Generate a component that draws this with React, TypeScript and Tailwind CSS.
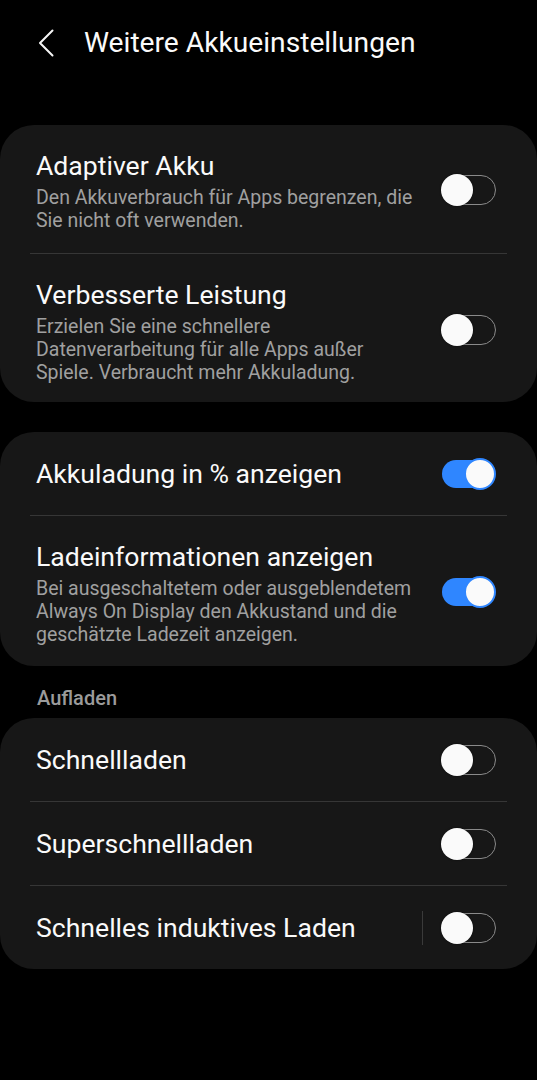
import React from "react";

function Toggle({ on }: { on: boolean }) {
  if (on) {
    return (
      <div className="relative w-[55px] h-[32px] shrink-0">
        <div className="absolute left-[1px] top-[2px] w-[53px] h-[28px] rounded-full bg-[#2f86ff]" />
        <div className="absolute right-0 top-0 w-[32px] h-[32px] rounded-full bg-[#fafafa] border-[2px] border-[#2f86ff]" />
      </div>
    );
  }
  return (
    <div className="relative w-[55px] h-[32px] shrink-0">
      <div className="absolute left-[1px] top-[1px] w-[54px] h-[30px] rounded-full border-[1.5px] border-[#8a8a8a]" />
      <div className="absolute left-0 top-0 w-[32px] h-[32px] rounded-full bg-[#fafafa] shadow-[0_0_2px_rgba(0,0,0,0.6)]" />
    </div>
  );
}

function Row({
  title,
  lines,
  on,
  divider,
  last,
  pb,
}: {
  title: string;
  lines?: string[];
  on: boolean;
  divider?: boolean;
  last?: boolean;
  pb?: string;
}) {
  const hasSub = lines && lines.length > 0;
  return (
    <div>
      <div
        className={
          hasSub
            ? "flex items-center pl-[36px] pr-[41px] pt-[27px] " + (pb ?? "pb-[21px]")
            : "flex items-center pl-[36px] pr-[41px] h-[83px]"
        }
      >
        <div className="flex-1 min-w-0">
          <div className="text-[26.6px] leading-[28px] text-[#fafafa]">{title}</div>
          {hasSub && (
            <div className="mt-[6px] text-[19.5px] leading-[23px] text-[#a0a0a0]">
              {lines!.map((l, i) => (
                <div key={i} className="whitespace-nowrap">
                  {l}
                </div>
              ))}
            </div>
          )}
        </div>
        {divider && <div className="w-px h-[34px] bg-[#3a3a3a] mr-[18px]" />}
        <div className={hasSub ? "mb-[5px]" : ""}>
          <Toggle on={on} />
        </div>
      </div>
      {!last && <div className="mx-[30px] h-px bg-[#363636]" />}
    </div>
  );
}

function Card({ children }: { children: React.ReactNode }) {
  return <div className="bg-[#171717] rounded-[34px] overflow-hidden">{children}</div>;
}

export default function App() {
  return (
    <div
      className="w-[537px] h-[1080px] bg-black text-white"
      style={{ fontFamily: "Roboto, 'Noto Sans', sans-serif" }}
    >
      <div className="flex items-center h-[86px] pl-[38px] pb-[1px]">
        <svg width="17" height="28" viewBox="0 0 17 28" className="mr-[29px]">
          <path d="M14.5 1.5 L2 14 L14.5 26.5" fill="none" stroke="#f5f5f5" strokeWidth="2" strokeLinecap="round" strokeLinejoin="round" />
        </svg>
        <div className="text-[28.2px] leading-[32px] text-[#fafafa]">Weitere Akkueinstellungen</div>
      </div>

      <div className="mt-[39px]">
        <Card>
          <Row
            title="Adaptiver Akku"
            lines={["Den Akkuverbrauch für Apps begrenzen, die", "Sie nicht oft verwenden."]}
            on={false}
            pb="pb-[21px]"
          />
          <Row
            title="Verbesserte Leistung"
            lines={[
              "Erzielen Sie eine schnellere",
              "Datenverarbeitung für alle Apps außer",
              "Spiele. Verbraucht mehr Akkuladung.",
            ]}
            on={false}
            pb="pb-[18px]"
            last
          />
        </Card>
      </div>

      <div className="mt-[30px]">
        <Card>
          <Row title="Akkuladung in % anzeigen" on={true} />
          <Row
            title="Ladeinformationen anzeigen"
            lines={[
              "Bei ausgeschaltetem oder ausgeblendetem",
              "Always On Display den Akkustand und die",
              "geschätzte Ladezeit anzeigen.",
            ]}
            on={true}
            pb="pb-[20px]"
            last
          />
        </Card>
      </div>

      <div className="mt-[21px] pl-[37px] text-[20px] leading-[23px] font-medium text-[#9b9b9b]">
        Aufladen
      </div>

      <div className="mt-[8px]">
        <Card>
          <Row title="Schnellladen" on={false} />
          <Row title="Superschnellladen" on={false} />
          <Row title="Schnelles induktives Laden" on={false} divider last />
        </Card>
      </div>
    </div>
  );
}
